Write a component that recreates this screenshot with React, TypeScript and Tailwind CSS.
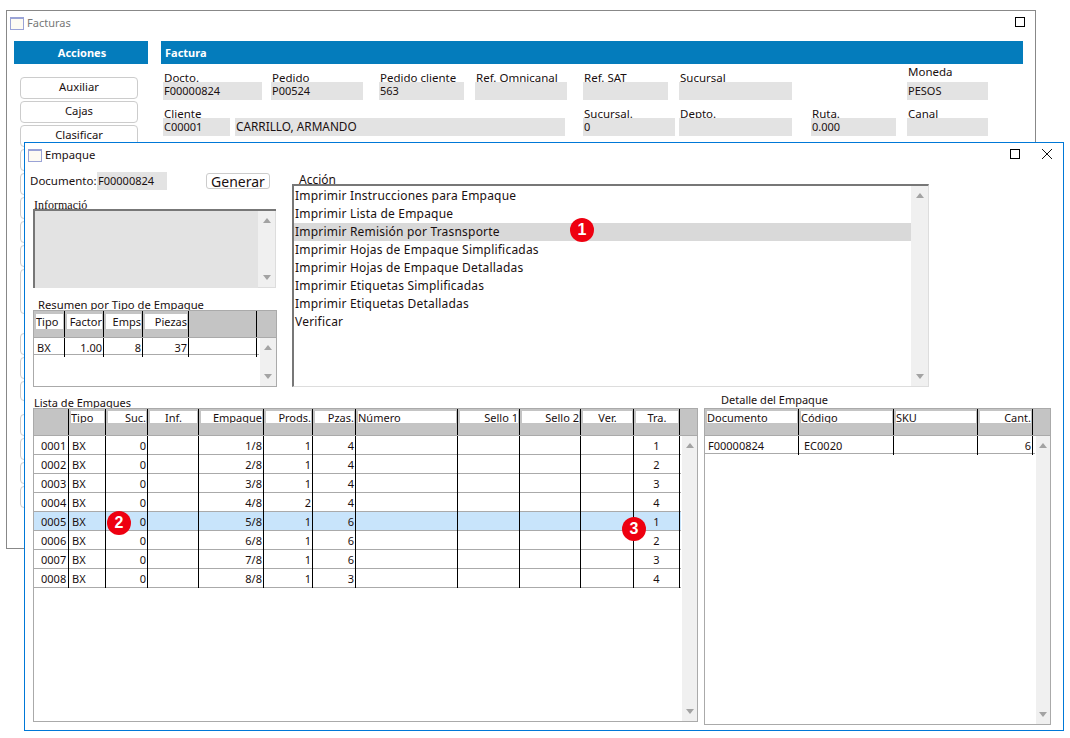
import React from "react";

const accionButtons = [
  { label: "Auxiliar", cls: "h-[22px]" },
  { label: "Cajas", cls: "h-[22px]" },
  { label: "Clasificar", cls: "h-[22px]" },
  { label: "", cls: "h-[22px]" },
  { label: "", cls: "h-[22px]" },
  { label: "", cls: "h-[22px]" },
  { label: "", cls: "h-[22px]" },
  { label: "", cls: "h-[22px]" },
  { label: "", cls: "h-[45px] mb-[19px]" },
  { label: "", cls: "h-[22px]" },
  { label: "", cls: "h-[22px]" },
  { label: "", cls: "h-[20px] mb-[13px]" },
  { label: "", cls: "h-[22px]" },
  { label: "", cls: "h-[22px]" },
  { label: "", cls: "h-[22px]" },
  { label: "", cls: "h-[22px]" },
];

const acciones = [
  "Imprimir Instrucciones para Empaque",
  "Imprimir Lista de Empaque",
  "Imprimir Remisión por Trasnsporte",
  "Imprimir Hojas de Empaque Simplificadas",
  "Imprimir Hojas de Empaque Detalladas",
  "Imprimir Etiquetas Simplificadas",
  "Imprimir Etiquetas Detalladas",
  "Verificar",
];

const empaques = [
  ["0001", "BX", "0", "", "1/8", "1", "4", "", "", "", "", "1"],
  ["0002", "BX", "0", "", "2/8", "1", "4", "", "", "", "", "2"],
  ["0003", "BX", "0", "", "3/8", "1", "4", "", "", "", "", "3"],
  ["0004", "BX", "0", "", "4/8", "2", "4", "", "", "", "", "4"],
  ["0005", "BX", "0", "", "5/8", "1", "6", "", "", "", "", "1"],
  ["0006", "BX", "0", "", "6/8", "1", "6", "", "", "", "", "2"],
  ["0007", "BX", "0", "", "7/8", "1", "6", "", "", "", "", "3"],
  ["0008", "BX", "0", "", "8/8", "1", "3", "", "", "", "", "4"],
];

type Col = { title?: string; head: string; cell: string };

const listaCols: Col[] = [
  { head: "", cell: "pl-[7px]" },
  { title: "Tipo", head: "text-left", cell: "pl-[3px]" },
  { title: "Suc.", head: "text-right", cell: "pr-[1px] text-right" },
  { title: "Inf.", head: "text-center", cell: "" },
  { title: "Empaque", head: "text-right", cell: "pr-[1px] text-right" },
  { title: "Prods.", head: "text-right", cell: "pr-[1px] text-right" },
  { title: "Pzas.", head: "text-right", cell: "pr-[1px] text-right" },
  { title: "Número", head: "text-left", cell: "" },
  { title: "Sello 1", head: "text-right", cell: "" },
  { title: "Sello 2", head: "text-right", cell: "" },
  { title: "Ver.", head: "text-center", cell: "" },
  { title: "Tra.", head: "text-center", cell: "text-center" },
];

const resumenCols: Col[] = [
  { title: "Tipo", head: "text-left", cell: "pl-[3px]" },
  { title: "Factor", head: "text-right", cell: "pr-[1px] text-right" },
  { title: "Emps", head: "text-right", cell: "pr-[1px] text-right" },
  { title: "Piezas", head: "text-right", cell: "pr-[1px] text-right" },
  { head: "", cell: "" },
];

const detalleCols: Col[] = [
  { title: "Documento", head: "text-left", cell: "pl-[3px]" },
  { title: "Código", head: "text-left", cell: "pl-[5px]" },
  { title: "SKU", head: "text-left", cell: "" },
  { title: "Cant.", head: "text-right", cell: "pr-[1px] text-right" },
];

function WindowIcon() {
  return (
    <span className="block h-[13px] w-[14px] shrink-0 border border-t-2 border-[#9aa3d6] bg-[#fdfbf3]" />
  );
}

function Arrow({ down }: { down?: boolean }) {
  return (
    <svg width="10" height="6" viewBox="0 0 10 6" className="block shrink-0">
      <polygon points={down ? "1,0 9,0 5,5" : "5,0 9,5 1,5"} fill="#a3a3a3" />
    </svg>
  );
}

function ScrollBar({ className }: { className: string }) {
  return (
    <div className={`flex flex-col items-center justify-between bg-[#f0f0f0] pt-[7px] pb-[6px] ${className}`}>
      <Arrow />
      <Arrow down />
    </div>
  );
}

function Field({
  label,
  value,
  className,
  labelClass = "-mb-[3px]",
  valueClass = "text-[11px]",
}: {
  label?: string;
  value?: string;
  className: string;
  labelClass?: string;
  valueClass?: string;
}) {
  return (
    <div className={className}>
      <div className={`h-[14px] pl-px text-[11.5px] leading-[14px] whitespace-nowrap ${labelClass}`}>{label}</div>
      <div className={`relative flex h-[18px] items-center bg-[#e3e3e3] pl-px ${valueClass}`}>{value}</div>
    </div>
  );
}

function GridTable({
  cols,
  template,
  rows,
  selected,
  rowsClass,
  rowClass,
  tableClass,
  barClass,
  headCell = "h-[12px] leading-[13px]",
}: {
  cols: Col[];
  template: string;
  rows: string[][];
  selected?: number;
  rowsClass: string;
  rowClass: string;
  tableClass: string;
  barClass: string;
  headCell?: string;
}) {
  return (
    <div className={`relative flex flex-col border border-[#aaaaaa] bg-white text-[11px] ${tableClass}`}>
      <div className="flex h-[26px] bg-[#c4c4c4]">
        <div className={`grid ${template}`}>
          {cols.map((c, i) => (
            <div key={i} className="border-r border-black pt-[2px]">
              {c.title && (
                <div className={`ml-[2px] mr-[1px] overflow-hidden bg-white whitespace-nowrap ${headCell} ${c.head}`}>
                  {c.title}
                </div>
              )}
            </div>
          ))}
        </div>
      </div>
      <div className="flex min-h-0 flex-1 border-t border-[#aaaaaa]">
        <div className={rowsClass}>
          {rows.map((r, i) => (
            <div
              key={i}
              className={`grid border-b border-[#aaaaaa] ${template} ${rowClass} ${i === selected ? "bg-[#c8e4fb]" : ""}`}
            >
              {r.map((v, j) => (
                <div key={j} className={`border-r border-black leading-[19px] whitespace-nowrap ${cols[j].cell}`}>
                  {v}
                </div>
              ))}
            </div>
          ))}
        </div>
        <ScrollBar className={barClass} />
      </div>
    </div>
  );
}

function Badge({ n, className }: { n: number; className: string }) {
  return (
    <div
      className={`absolute flex h-6 w-6 items-center justify-center rounded-full bg-[#ee0010] font-['Liberation_Sans',sans-serif] text-[16px] font-bold text-white ${className}`}
    >
      {n}
    </div>
  );
}

export default function App() {
  return (
    <div className="relative h-[738px] w-[1070px] overflow-hidden bg-white font-['Noto_Sans',sans-serif] text-[12px] text-[#1a1010]">
      {/* Facturas */}
      <div className="absolute left-[6px] top-[10px] h-[539px] w-[1030px] border border-[#888888] bg-white">
        <div className="flex h-[30px] items-start justify-between pl-[3px] pr-[10px] pt-[5px]">
          <div className="flex items-center gap-[3px] text-[11px] text-[#777777]">
            <WindowIcon />
            <span className="leading-[14px]">Facturas</span>
          </div>
          <span className="mt-px block h-[10px] w-[10px] border border-black" />
        </div>
        <div className="flex pl-[7px]">
          <div className="w-[134px]">
            <div className="flex h-[23px] items-center justify-center bg-[#047cbc] pl-[2px] pt-[2px] text-[11px] font-bold text-white">Acciones</div>
            <div className="ml-[6px] mt-[13px] w-[118px] text-[11.25px]">
              {accionButtons.map((b, i) => (
                <div key={i} className={`mb-[2px] flex items-center justify-center rounded-[4px] border border-[#cccccc] pb-[2px] ${b.cls}`}>
                  {b.label}
                </div>
              ))}
            </div>
          </div>
          <div className="ml-[13px] w-[862px]">
            <div className="flex h-[23px] items-center bg-[#047cbc] pl-[4px] pt-[2px] text-[11px] font-bold text-white">Factura</div>
            <div className="flex h-[36px] items-end pl-[2px]">
              <Field label="Docto." value="F00000824" className="w-[99px]" />
              <Field label="Pedido" value="P00524" className="ml-[9px] w-[92px]" />
              <Field label="Pedido cliente" value="563" className="ml-[16px] w-[85px]" />
              <Field label="Ref. Omnicanal" className="ml-[11px] w-[92px]" />
              <Field label="Ref. SAT" className="ml-[16px] w-[85px]" />
              <Field label="Sucursal" className="ml-[11px] w-[113px]" />
              <Field label="Moneda" value="PESOS" labelClass="mb-[3px]" className="ml-[115px] w-[81px]" />
            </div>
            <div className="flex h-[36px] items-end pl-[2px]">
              <Field label="Cliente" value="C00001" className="w-[67px]" />
              <Field value="CARRILLO, ARMANDO" valueClass="text-[11.8px]" className="ml-[5px] w-[330px]" />
              <Field label="Sucursal." value="0" className="ml-[18px] w-[92px]" />
              <Field label="Depto." className="ml-[4px] w-[113px]" />
              <Field label="Ruta." value="0.000" className="ml-[19px] w-[85px]" />
              <Field label="Canal" className="ml-[11px] w-[81px]" />
            </div>
          </div>
        </div>
      </div>

      {/* Empaque */}
      <div className="absolute left-[24px] top-[142px] h-[589px] w-[1040px] border border-[#0078d7] bg-white">
        <div className="flex h-[29px] items-start justify-between pl-[3px] pr-[11px] pt-[5px]">
          <div className="flex items-center gap-[3px] text-[11.25px]">
            <WindowIcon />
            <span className="leading-[14px]">Empaque</span>
          </div>
          <div className="flex items-center gap-[22px] pt-px">
            <span className="block h-[10px] w-[10px] border border-black" />
            <svg width="10" height="10" viewBox="0 0 10 10" className="block">
              <path d="M0 0L10 10M10 0L0 10" stroke="#111" strokeWidth="1" fill="none" />
            </svg>
          </div>
        </div>

        <div className="flex pl-[5px]">
          <div className="w-[247px]">
            <div className="flex items-center">
              <span className="w-[67px] text-[11.5px] whitespace-nowrap">Documento:</span>
              <span className="flex h-[18px] w-[70px] items-center bg-[#e3e3e3] pl-px text-[11px]">F00000824</span>
              <span className="ml-[39px] flex h-[16px] w-[64px] items-center justify-center rounded-[3px] border border-[#cccccc] text-[14px]">Generar</span>
            </div>
            <div className="ml-[4px] mt-[8px] h-[14px] font-['Liberation_Serif',serif] leading-[14px]">Informació</div>
            <div className="relative -mt-[3px] ml-[3px] flex h-[79px] w-[243px] border-l-2 border-t-2 border-[#777777] bg-[#e3e3e3]">
              <div className="flex-1" />
              <ScrollBar className="w-[18px] border-b border-r border-[#dddddd]" />
            </div>
            <div className="ml-[8px] mt-[10px] h-[14px] text-[11.25px] leading-[14px] whitespace-nowrap">Resumen por Tipo de Empaque</div>
            <GridTable
              cols={resumenCols}
              template="grid-cols-[31px_39px_39px_46px_68px]"
              rows={[["BX", "1.00", "8", "37", ""]]}
              tableClass="ml-[3px] -mt-[2px] h-[77px] w-[244px]"
              rowsClass="w-[225px]"
              rowClass="h-[17px]"
              barClass="ml-px flex-1"
              headCell="mt-[1px] h-[15px] leading-[15px]"
            />
          </div>

          <div className="ml-[15px] w-[637px]">
            <div className="ml-[7px] mt-px h-[14px] leading-[14px]">Acción</div>
            <div className="relative -mt-[3px] flex h-[203px] border-b border-l-2 border-r border-t-2 border-b-[#dddddd] border-l-[#777777] border-r-[#dddddd] border-t-[#777777] bg-white">
              <div className="flex-1 pt-px tracking-[0.2px]">
                {acciones.map((a, i) => (
                  <div key={a} className={`h-[18px] pl-[1px] leading-[18px] ${i === 2 ? "bg-[#d9d9d9]" : ""}`}>
                    {a}
                  </div>
                ))}
              </div>
              <ScrollBar className="w-[17px]" />
            </div>
          </div>
        </div>

        <div className="ml-[8px] mt-[6px] flex">
          <div className="w-[665px]">
            <div className="ml-px mt-[3px] h-[14px] text-[11px] leading-[14px]">Lista de Empaques</div>
            <GridTable
              cols={listaCols}
              template="grid-cols-[35px_37px_42px_51px_65px_49px_43px_102px_62px_61px_53px_46px]"
              rows={empaques}
              selected={4}
              tableClass="-mt-[2px] h-[314px]"
              rowsClass="w-[647px]"
              rowClass="h-[19px]"
              barClass="ml-px flex-1"
            />
          </div>
          <div className="ml-[6px] w-[347px]">
            <div className="ml-[17px] h-[14px] text-[11px] leading-[14px]">Detalle del Empaque</div>
            <GridTable
              cols={detalleCols}
              template="grid-cols-[94px_95px_84px_55px]"
              rows={[["F00000824", "EC0020", "", "6"]]}
              tableClass="mt-px h-[317px]"
              rowsClass="w-[330px]"
              rowClass="h-[18px]"
              barClass="ml-px flex-1"
            />
          </div>
        </div>
      </div>

      <Badge n={1} className="left-[570px] top-[218px]" />
      <Badge n={2} className="left-[107px] top-[511px]" />
      <Badge n={3} className="left-[622px] top-[517px]" />
    </div>
  );
}
